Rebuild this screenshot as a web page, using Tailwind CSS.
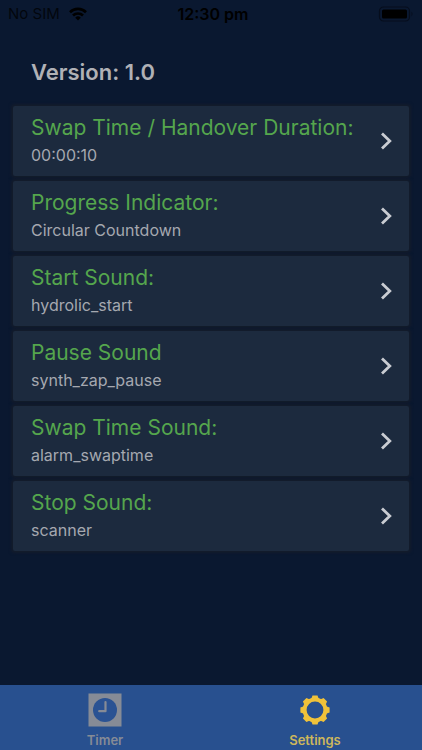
<!DOCTYPE html>
<html lang="en">
<head>
  <meta charset="UTF-8">
  <meta name="viewport" content="width=device-width, initial-scale=1.0">
  <title>Settings</title>
  <script src="https://cdn.jsdelivr.net/npm/@tailwindcss/browser@4"></script>
</head>
<body class="bg-[#0a1830] font-['Inter','Liberation_Sans',sans-serif] flex flex-col min-h-screen">
  <!-- status bar -->
  <header class="grid grid-cols-3 items-center h-7 px-2 text-black/75">
    <div class="flex items-center gap-2 text-[15px]">
      <span>No SIM</span>
      <svg class="w-[20px] h-[14px] text-black" viewBox="0 0 18 14" fill="none" stroke="currentColor" stroke-width="2.6" aria-hidden="true">
        <path d="M1 5.2a11.4 11.4 0 0 1 16 0" />
        <path d="M4 8.5a7.1 7.1 0 0 1 10 0" />
        <path d="M9 13.6 6.2 10.7a4 4 0 0 1 5.6 0z" fill="currentColor" stroke="none" />
      </svg>
    </div>
    <span class="pl-1 text-center text-[16px] font-semibold text-black whitespace-nowrap">12:30 pm</span>
    <svg class="w-[36px] h-[16px] justify-self-end" viewBox="0 0 36 16" aria-hidden="true">
      <rect x="1.5" y="1" width="30" height="14" rx="4" fill="none" stroke="#060d1c" stroke-width="1.2" />
      <rect x="4" y="3.5" width="25" height="9" rx="1.5" fill="#000" />
      <path d="M33.5 5.6q2 2.4 0 4.8z" fill="#060d1c" />
    </svg>
  </header>

  <main class="flex-1 px-[13px] pt-7">
    <h1 class="pl-[18px] text-[22px] leading-8 font-semibold text-[#b0b1b6]">Version: 1.0</h1>

    <div id="settings" class="mt-[18px] flex flex-col gap-[5px]"></div>
  </main>

  <!-- tab bar -->
  <nav class="grid grid-cols-2 h-[65px] pr-[2px] bg-[#28508f] text-[13px] leading-4 font-semibold">
    <a href="#timer" class="flex flex-col items-center pt-2 gap-[5px] text-[#868b96]">
      <svg class="w-[34px] h-[34px]" viewBox="0 0 34 34" aria-hidden="true">
        <rect x=".5" y=".5" width="33" height="33" fill="#868b96" />
        <circle cx="17" cy="17" r="12" fill="#2a5293" />
        <path d="M17.5 9v9.2h-6.3" fill="none" stroke="#868b96" stroke-width="2.2" stroke-linecap="round" stroke-linejoin="round" />
      </svg>
      Timer
    </a>
    <a href="#settings" class="flex flex-col items-center pt-2 gap-[5px] text-[#cdb75c]">
      <svg class="w-[34px] h-[34px]" viewBox="-17 -17 34 34" fill="#f0c23a" aria-hidden="true">
        <circle r="10.4" fill="none" stroke="#f0c23a" stroke-width="4" />
        <path id="tooth" d="M-3.8-11 -2.5-14.6h5L3.8-11z" />
        <use href="#tooth" transform="rotate(45)" />
        <use href="#tooth" transform="rotate(90)" />
        <use href="#tooth" transform="rotate(135)" />
        <use href="#tooth" transform="rotate(180)" />
        <use href="#tooth" transform="rotate(225)" />
        <use href="#tooth" transform="rotate(270)" />
        <use href="#tooth" transform="rotate(315)" />
      </svg>
      Settings
    </a>
  </nav>

  <script>
    const settings = [
      ['Swap Time / Handover Duration:', '00:00:10'],
      ['Progress Indicator:', 'Circular Countdown'],
      ['Start Sound:', 'hydrolic_start'],
      ['Pause Sound', 'synth_zap_pause'],
      ['Swap Time Sound:', 'alarm_swaptime'],
      ['Stop Sound:', 'scanner'],
    ];

    document.getElementById('settings').innerHTML = settings.map(([name, value]) => `
      <button type="button" class="flex items-center justify-between w-full h-[70px] pl-[18px] pr-4 rounded-xs bg-[#1c2a3e] text-left shadow-[0_0_3px_2px_#141c2b]">
        <span class="flex flex-col">
          <span class="text-[21px] leading-7 text-[#55a64d] whitespace-nowrap">${name}</span>
          <span class="text-[16px] leading-[26px] text-[#a5a8b0]">${value}</span>
        </span>
        <svg class="w-[14px] h-[18px] shrink-0" viewBox="0 0 14 18" fill="none" stroke="#c9ccd2" stroke-width="2.8" aria-hidden="true">
          <path d="M3 1.5 10.8 9 3 16.5" />
        </svg>
      </button>`).join('');
  </script>
</body>
</html>
